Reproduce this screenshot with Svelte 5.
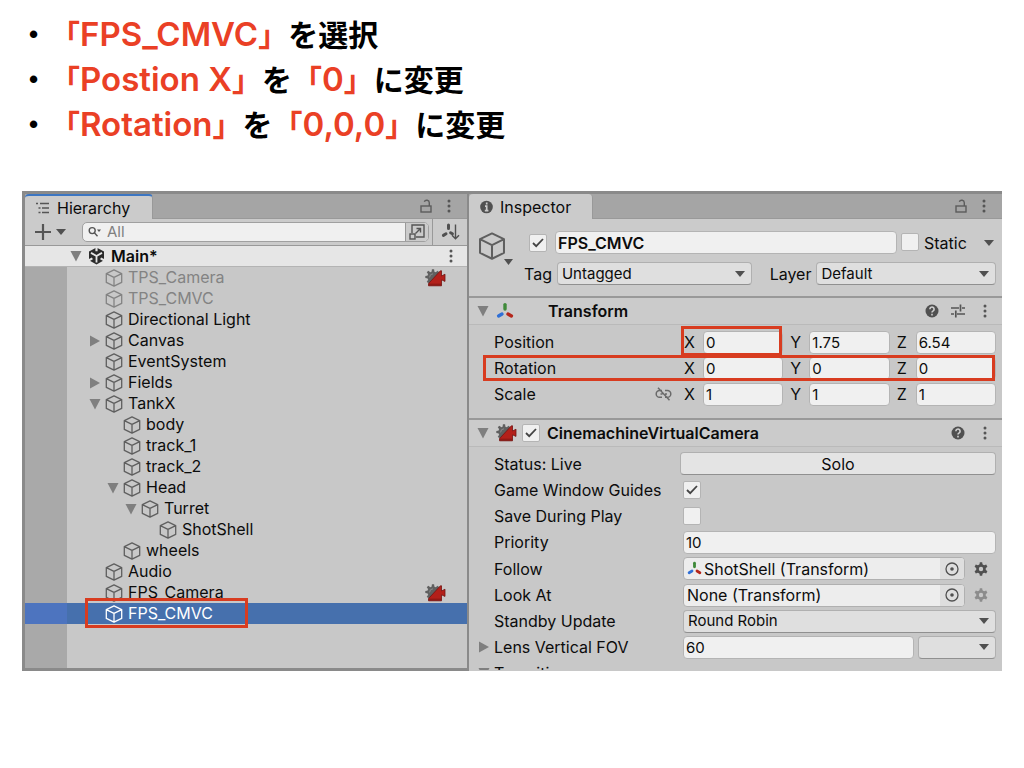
<script>
  const steps = [
    [['「', 'FPS_CMVC', '」'], 'を選択'],
    [['「', 'Postion X', '」'], 'を', ['「', '0', '」'], 'に変更'],
    [['「', 'Rotation', '」'], 'を', ['「', '0,0,0', '」'], 'に変更']
  ];

  const tree = [
    { name: 'TPS_Camera', level: 0, off: true, cam: true },
    { name: 'TPS_CMVC', level: 0, off: true },
    { name: 'Directional Light', level: 0 },
    { name: 'Canvas', level: 0, fold: 'closed' },
    { name: 'EventSystem', level: 0 },
    { name: 'Fields', level: 0, fold: 'closed' },
    { name: 'TankX', level: 0, fold: 'open' },
    { name: 'body', level: 1 },
    { name: 'track_1', level: 1 },
    { name: 'track_2', level: 1 },
    { name: 'Head', level: 1, fold: 'open' },
    { name: 'Turret', level: 2, fold: 'open' },
    { name: 'ShotShell', level: 3 },
    { name: 'wheels', level: 1 },
    { name: 'Audio', level: 0 },
    { name: 'FPS_Camera', level: 0, cam: true },
    { name: 'FPS_CMVC', level: 0, selected: true }
  ];

  let vectors = $state([
    { name: 'Position', values: ['0', '1.75', '6.54'] },
    { name: 'Rotation', values: ['0', '0', '0'] },
    { name: 'Scale', values: ['1', '1', '1'] }
  ]);
  const axes = ['X', 'Y', 'Z'];

  let active = $state(true);
  let isStatic = $state(false);
  let enabled = $state(true);
  let guides = $state(true);
  let savePlay = $state(false);
</script>

{#snippet cube(size)}
  <svg class="cube" width={size} height={size} viewBox="0 0 18 18" fill="none" stroke="currentColor" stroke-width="1.3" stroke-linejoin="round" aria-hidden="true">
    <path d="M9 .9 16.7 4.6V13.4L9 17.2 1.3 13.4V4.6ZM1.3 4.6 9 8.4 16.7 4.6M9 8.4V17.2" />
  </svg>
{/snippet}

{#snippet down(w)}
  <svg class="down" width={w} height="6" viewBox="0 0 10 6" preserveAspectRatio="none" aria-hidden="true"><path d="M0 0H10L5 6Z" fill="#505050" /></svg>
{/snippet}

{#snippet fold(kind)}
  <svg class="fold" width="12" height="12" viewBox="0 0 12 12" aria-hidden="true">
    <path d={kind === 'open' ? 'M.5 1H11.5L6 11.5Z' : 'M1 .5V11.5L11 6Z'} fill="#7f7f7f" />
  </svg>
{/snippet}

{#snippet dots()}
  <svg width="4" height="14" viewBox="0 0 4 14" fill="#555" aria-hidden="true"><circle cx="2" cy="2" r="1.5" /><circle cx="2" cy="7" r="1.5" /><circle cx="2" cy="12" r="1.5" /></svg>
{/snippet}

{#snippet lock()}
  <svg width="12" height="14" viewBox="0 0 12 14" fill="none" stroke="#5c5c5c" stroke-width="1.4" aria-hidden="true"><rect x="1" y="7" width="10" height="6" /><path d="M9.3 7V3.8A2.6 2.6 0 0 0 4.3 2.8" /></svg>
{/snippet}

{#snippet axesIcon(size)}
  <svg width={size} height={size} viewBox="0 0 18 18" fill="none" stroke-width="3.4" stroke-linecap="round" aria-hidden="true">
    <path d="M9 2.6V7" stroke="#3f8a3a" /><path d="M6 12 2.6 14" stroke="#2f6fd6" /><path d="M12 12 15.4 14" stroke="#b5261b" />
  </svg>
{/snippet}

{#snippet gear(size, color)}
  <svg width={size} height={size} viewBox="0 0 14 14" aria-hidden="true">
    <g fill={color}>
      <path fill-rule="evenodd" d="M7 2.2A4.8 4.8 0 1 0 7 11.8 4.8 4.8 0 0 0 7 2.2ZM7 4.8A2.2 2.2 0 1 1 7 9.2 2.2 2.2 0 0 1 7 4.8Z" />
      {#each [0, 60, 120, 180, 240, 300] as a}
        <path d="M5.4 3 5.8.3H8.2L8.6 3Z" transform="rotate({a} 7 7)" />
      {/each}
    </g>
  </svg>
{/snippet}

{#snippet cinemachine()}
  <svg class="cam" width="21" height="18" viewBox="0 0 21 18" aria-hidden="true">
    <g fill="#606060">
      <circle cx="8" cy="8" r="5.6" />
      {#each [0, 45, 90, 135, 180, 225, 270, 315] as a}
        <path d="M6.5 3.2 6.9.3H9.1L9.5 3.2Z" transform="rotate({a} 8 8)" />
      {/each}
    </g>
    <path d="M4.6 8.4A3.6 3.6 0 0 1 8 4.8" fill="none" stroke="#8a8a8a" />
    <path d="M3.5 16.8V14.6L15.4 1.8H16.5V7L20 5.2V12.4L16.5 10.8V16.8Z" fill="#b3201a" stroke="#721411" stroke-width=".8" />
    <path d="M4 14.6H16.2V16.6H4Z" fill="#7b1612" opacity=".6" />
  </svg>
{/snippet}

{#snippet help()}
  <svg width="14" height="14" viewBox="0 0 14 14" aria-hidden="true"><circle cx="7" cy="7" r="6.5" fill="#505050" /><path d="M4.9 5.3A2.1 2.1 0 1 1 8.2 6.9Q7 7.6 7 8.5M7 9.8V11.4" fill="none" stroke="#d0d0d0" stroke-width="1.6" /></svg>
{/snippet}

{#snippet tick(on)}
  {#if on}
    <svg width="12" height="12" viewBox="0 0 12 12" fill="none" stroke="#444" stroke-width="1.8" aria-hidden="true"><path d="M1 6 4.2 9.2 11 2" /></svg>
  {/if}
{/snippet}

{#snippet target()}
  <svg width="14" height="14" viewBox="0 0 14 14" fill="none" stroke="#505050" stroke-width="1.3" aria-hidden="true"><circle cx="7" cy="7" r="6" /><circle cx="7" cy="7" r="1.8" fill="#505050" stroke="none" /></svg>
{/snippet}

<main>
  <ul class="steps">
    {#each steps as step}
      <li><span class="bullet">•</span><span>{#each step as part}{#if Array.isArray(part)}<span class="hot">{part[0]}<span class="latin">{part[1]}</span>{part[2]}</span>{:else}{part}{/if}{/each}</span></li>
    {/each}
  </ul>

  <div class="editor">
    <section class="hierarchy">
      <header class="tabs">
        <div class="tab focused">
          <svg width="14" height="12" viewBox="0 0 14 12" stroke="#555" stroke-width="1.4" aria-hidden="true"><path d="M0 1.5H2M4 1.5H13M2.5 6H4.5M6 6H13M2.5 10.5H4.5M6 10.5H13" /></svg>
          Hierarchy
        </div>
        <div class="tab-tools"><button aria-label="Lock">{@render lock()}</button><button aria-label="Menu">{@render dots()}</button></div>
      </header>
      <div class="toolbar">
        <button class="add" aria-label="Create">
          <svg width="16" height="16" viewBox="0 0 16 16" stroke="#555" stroke-width="2.2" aria-hidden="true"><path d="M8 0V16M0 8H16" /></svg>
          {@render down(10)}
        </button>
        <div class="search">
          <svg width="14" height="12" viewBox="0 0 14 12" fill="none" stroke="#555" stroke-width="1.4" aria-hidden="true"><circle cx="4.2" cy="4.6" r="3" /><path d="M6.4 6.8 9.5 10.2" /><path d="M9 3.6H13L11 6Z" fill="#555" stroke="none" /></svg>
          <input type="text" placeholder="All" aria-label="Search hierarchy" />
          <button class="pick" aria-label="Open search">
            <svg width="16" height="16" viewBox="0 0 16 16" fill="none" stroke="#555" stroke-width="1.4" aria-hidden="true"><path d="M3 9V1H15V13H7" /><rect x="1" y="10" width="5" height="5" /><path d="M6.5 9.5 11.5 4.5M7.5 4.5H11.5V8.5" /></svg>
          </button>
        </div>
        <button class="sort" aria-label="Sorting">
          <svg width="19" height="18" viewBox="0 0 19 18" fill="none" stroke="#505050" aria-hidden="true"><path d="M7.5 2V5.4M5 10.8 2.4 12.4M9.6 9.8 11.4 10.8" stroke-width="3" stroke-linecap="round" /><path d="M14.5 1.5V15.5M11 12.2 14.5 15.8 18 12.2" stroke-width="1.4" /></svg>
        </button>
      </div>
      <div class="scene">
        {@render fold('open')}
        <svg width="17" height="18" viewBox="0 0 17 18" aria-hidden="true"><path d="M8.5.5 16 4.6V13.2L8.5 17.5 1 13.2V4.6Z" fill="#2b2b2b" /><path d="M8.5 9V15.4M8.5 9 3 5.9M8.5 9 14 5.9" stroke="#e6e6e6" stroke-width="1.8" /><path d="M8.5 0V4.2M0 13.8 4.4 11.4M17 13.8 12.6 11.4" stroke="#e6e6e6" stroke-width="2.2" /></svg>
        <strong>Main*</strong>
        <button aria-label="Scene menu">{@render dots()}</button>
      </div>
      <ul class="tree">
        {#each tree as node}
          <li class:off={node.off} class:selected={node.selected}>
            <span class="gutter"></span>
            <span class="node level{node.level}">
              <span class="slot">{#if node.fold}{@render fold(node.fold)}{/if}</span>
              {@render cube(18)}
              <span class="name">{node.name}</span>
              {#if node.selected}<span class="mark"></span>{/if}
            </span>
            {#if node.cam}{@render cinemachine()}{/if}
          </li>
        {/each}
        <li class="rest"><span class="gutter"></span></li>
      </ul>
    </section>

    <section class="inspector">
      <header class="tabs">
        <div class="tab">
          <svg width="13" height="14" viewBox="0 0 13 14" aria-hidden="true"><circle cx="6.5" cy="7" r="6.3" fill="#505050" /><path d="M6.7 2.6V4.4M5 6.2H6.7V10.4M4.8 10.6H8.4" stroke="#cbcbcb" stroke-width="1.7" fill="none" /></svg>
          Inspector
        </div>
        <div class="tab-tools"><button aria-label="Lock">{@render lock()}</button><button aria-label="Menu">{@render dots()}</button></div>
      </header>

      <div class="object">
        <button class="kind" aria-label="Object icon">{@render cube(28)}{@render down(9)}</button>
        <div class="object-rows">
          <div class="row1">
            <span class="check"><input type="checkbox" bind:checked={active} aria-label="Active" />{@render tick(active)}</span>
            <input class="field title" type="text" value="FPS_CMVC" aria-label="Name" />
            <label class="static"><span class="check"><input type="checkbox" bind:checked={isStatic} />{@render tick(isStatic)}</span>Static</label>
            <button class="static-menu" aria-label="Static options">{@render down(10)}</button>
          </div>
          <div class="row2">
            <label for="tag">Tag</label>
            <span class="select"><select id="tag"><option>Untagged</option></select>{@render down(10)}</span>
            <label for="layer" class="layer">Layer</label>
            <span class="select"><select id="layer"><option>Default</option></select>{@render down(10)}</span>
          </div>
        </div>
      </div>

      <header class="component">
        {@render fold('open')}
        {@render axesIcon(18)}
        <h2>Transform</h2>
        <div class="component-tools">
          <button aria-label="Help">{@render help()}</button>
          <button aria-label="Presets"><svg width="14" height="14" viewBox="0 0 14 14" stroke="#555" stroke-width="1.7" aria-hidden="true"><path d="M0 4H8M11 4H14M9.5 0.5V7.5M0 10H3M6 10H14M4.8 6.5V13.5" /></svg></button>
          <button aria-label="Menu">{@render dots()}</button>
        </div>
      </header>
      <div class="props transform">
        {#each vectors as v, i}
          <div class="prop">
            <span class="label">{v.name}
              {#if v.name === 'Scale'}
                <svg width="17" height="14" viewBox="0 0 17 14" fill="none" stroke="#6a6a6a" stroke-width="1.5" aria-hidden="true"><path d="M7 3.5H4.6A3.4 3.4 0 0 0 4.6 10.3H7M10 3.5H12.4A3.4 3.4 0 0 1 12.4 10.3H10M5.5 7H7.5M10 7H12M3 .8 14.5 13.2" /></svg>
              {/if}
            </span>
            <div class="vector">
              {#each axes as axis, j}
                <label class="axis"><span>{axis}</span><input class="field" type="text" bind:value={v.values[j]} aria-label="{v.name} {axis}" />{#if i === 0 && j === 0}<span class="mark"></span>{/if}</label>
              {/each}
            </div>
            {#if i === 1}<span class="mark"></span>{/if}
          </div>
        {/each}
      </div>

      <header class="component">
        {@render fold('open')}
        {@render cinemachine()}
        <span class="check"><input type="checkbox" bind:checked={enabled} aria-label="Enabled" />{@render tick(enabled)}</span>
        <h2>CinemachineVirtualCamera</h2>
        <div class="component-tools">
          <button aria-label="Help">{@render help()}</button>
          <button aria-label="Menu">{@render dots()}</button>
        </div>
      </header>
      <div class="props vcam">
        <div class="prop"><span class="label">Status: Live</span><button class="solo">Solo</button></div>
        <div class="prop"><label class="label" for="guides">Game Window Guides</label><span class="check"><input id="guides" type="checkbox" bind:checked={guides} />{@render tick(guides)}</span></div>
        <div class="prop"><label class="label" for="save">Save During Play</label><span class="check"><input id="save" type="checkbox" bind:checked={savePlay} />{@render tick(savePlay)}</span></div>
        <div class="prop"><label class="label" for="priority">Priority</label><input id="priority" class="field" type="text" value="10" /></div>
        <div class="prop">
          <label class="label" for="follow">Follow</label>
          <span class="ref">{@render axesIcon(15)}<input id="follow" type="text" readonly value="ShotShell (Transform)" /><button aria-label="Pick follow target">{@render target()}</button></span>
          <button class="cog" aria-label="Follow options">{@render gear(14, '#505050')}</button>
        </div>
        <div class="prop">
          <label class="label" for="look">Look At</label>
          <span class="ref"><input id="look" type="text" readonly value="None (Transform)" /><button aria-label="Pick look-at target">{@render target()}</button></span>
          <button class="cog" aria-label="Look-at options">{@render gear(14, '#8c8c8c')}</button>
        </div>
        <div class="prop"><label class="label" for="standby">Standby Update</label><span class="select"><select id="standby"><option>Round Robin</option></select>{@render down(10)}</span></div>
        <div class="prop folding">
          {@render fold('closed')}
          <label class="label" for="fov">Lens Vertical FOV</label><input id="fov" class="field" type="text" value="60" />
          <span class="select preset"><select aria-label="Lens preset"><option></option></select>{@render down(10)}</span>
        </div>
        <div class="prop folding cut">{@render fold('open')}<span class="label">Transitions</span></div>
      </div>
    </section>
  </div>
</main>

<style>
  :global(body) { margin: 0; background: #fff; }
  main { padding: 12px 22px 0; font: 16px/20px Inter, sans-serif; color: #0c0c0c; }
  ul { list-style: none; margin: 0; padding: 0; }
  svg { flex: none; display: block; }
  button, input, select { font: inherit; color: inherit; margin: 0; box-sizing: border-box; }
  button { display: flex; align-items: center; justify-content: center; padding: 0; border: 0; background: none; }

  .steps { font: 600 30px/45px Inter, "Noto Sans CJK JP", sans-serif; color: #000; margin-bottom: 44px; }
  .steps li { display: flex; height: 45px; padding-left: 7px; white-space: nowrap; }
  .bullet { width: 21px; font-family: "Liberation Sans", sans-serif; font-size: 26px; }
  .hot { color: #ea4025; }
  .latin { font-size: 33px; }

  .editor { display: grid; grid-template-columns: 442fr 533fr; gap: 2px; padding: 3px 0 0 3px; background: #8a8a8a; }
  .hierarchy, .inspector { background: #c8c8c8; min-width: 0; }
  .hierarchy { display: flex; flex-direction: column; margin-bottom: 3px; }

  .tabs { display: flex; justify-content: space-between; height: 24px; background: #a5a5a5; border-bottom: 1px solid #999; }
  .tab { box-sizing: border-box; display: flex; align-items: center; gap: 7px; height: 25px; padding: 1px 21px 0 11px; background: #cbcbcb; border-right: 1px solid #999; border-radius: 4px 4px 0 0; }
  .tab.focused { border-top: 2px solid #3c76c2; padding-top: 0; padding-right: 22px; }
  .tab-tools { display: flex; align-items: center; gap: 15px; padding-right: 16px; }

  .toolbar { display: flex; align-items: stretch; height: 26px; background: #cbcbcb; border-bottom: 1px solid #999; }
  .add { width: 50px; gap: 5px; }
  .search { flex: 1; display: flex; align-items: center; box-sizing: border-box; margin: 3px 3px 3px 7px; padding-left: 5px; border: 1px solid #a0a0a0; border-radius: 5px; background: #f0f0f0; overflow: hidden; }
  .search input { flex: 1; min-width: 0; border: 0; background: none; padding: 0 5px; font-size: 15px; }
  .search input::placeholder { color: #808080; opacity: 1; }
  .pick { width: 23px; align-self: stretch; background: #cbcbcb; border-left: 1px solid #999; }
  .sort { width: 35px; border-left: 1px solid #999; }

  .scene { display: flex; align-items: center; height: 20px; padding: 0 14px 0 45px; background: #e6e6e6; border-bottom: 1px solid #b4b4b4; gap: 6px; }
  .scene button { margin-left: auto; }
  .scene strong { font-weight: 600; }

  .tree { flex: 1; display: flex; flex-direction: column; }
  .tree li { display: flex; align-items: center; height: 21px; color: #0c0c0c; }
  .tree .rest { flex: 1; min-height: 44px; }
  .gutter { align-self: stretch; width: 42px; background: #a9a9a9; }
  .node { position: relative; flex: 1; align-self: stretch; display: flex; align-items: center; }
  .cube { color: #5f5f5f; }
  .slot { width: 16px; }
  .name { padding: 0 0 2px 5px; }
  .level0 { padding-left: 22px; }
  .level1 { padding-left: 40px; }
  .level2 { padding-left: 58px; }
  .level3 { padding-left: 76px; }
  .tree .cam { margin-right: 21px; }
  .off .name, .off .cube { color: #838383; }
  .tree li.selected { background: #4670ad; color: #fff; }
  .selected .gutter { background: #4d74bf; }
  .selected .cube { color: #fff; }

  .mark { position: absolute; border: 3px solid #d83c20; pointer-events: none; box-sizing: border-box; }
  .node .mark { left: 18px; width: 163px; top: -5px; height: 30px; }
  .axis .mark { left: -3px; right: 1px; top: -5px; height: 30px; }
  .prop > .mark { left: 14px; right: 7px; top: 0; height: 26px; }

  .field { flex: 1; min-width: 0; width: 100%; height: 23px; padding: 0 2px; border: 1px solid #b4b4b4; border-radius: 4px; background: #f0f0f0; font-size: 15px; }
  .title { font-size: 16px; font-weight: 600; }
  .check { display: grid; place-items: center; width: 18px; height: 18px; }
  .check > :global(*) { grid-area: 1 / 1; }
  .check svg { pointer-events: none; }
  .check input { appearance: none; width: 18px; height: 18px; border: 1px solid #b4b4b4; border-radius: 2px; background: #f0f0f0; }
  .select { flex: 1; min-width: 0; display: grid; align-items: center; }
  .select select { grid-area: 1 / 1; appearance: none; width: 100%; height: 23px; padding: 0 4px; border: 1px solid #b0b0b0; border-bottom-color: #909090; border-radius: 4px; background: #dfdfdf; font-size: 15px; }
  .select svg { grid-area: 1 / 1; justify-self: end; margin-right: 7px; pointer-events: none; }

  .object { display: flex; height: 77px; box-sizing: border-box; padding: 12px 6px 0 9px; background: #cbcbcb; }
  .kind { align-self: flex-start; align-items: flex-end; width: 39px; height: 34px; justify-content: flex-start; }
  .kind .cube { margin-bottom: 5px; }
  .kind .down { margin-left: -2px; }
  .object-rows { flex: 1; min-width: 0; display: flex; flex-direction: column; gap: 8px; }
  .row1, .row2 { display: flex; align-items: center; }
  .row1 { padding-left: 12px; gap: 8px; }
  .row1 .static { display: flex; gap: 5px; width: 72px; margin-left: -4px; }
  .static-menu { width: 15px; }
  .row2 { padding-left: 7px; gap: 5px; }
  .row2 .select { flex: 193; }
  .row2 .layer { margin-left: 13px; }
  .row2 .layer + .select { flex: 178; }

  .component { display: flex; align-items: center; height: 26px; padding: 0 15px 0 8px; background: #cbcbcb; border-top: 2px solid #999; border-bottom: 1px solid #bababa; gap: 7px; }
  .component h2 { margin: 0; font-size: 16px; font-weight: 600; }
  .component svg + h2 { margin-left: 27px; }
  .component .cam + .check { margin-left: -2px; }
  .component-tools { display: flex; gap: 12px; margin-left: auto; align-items: center; }
  .component-tools button:last-child { margin-left: 6px; }

  .transform { padding: 4px 0 11px; }
  .prop { position: relative; display: flex; align-items: center; height: 26px; padding: 0 6px 0 25px; }
  .label { box-sizing: border-box; width: 189px; flex: none; white-space: nowrap; }
  .transform .label { display: flex; align-items: center; justify-content: space-between; padding-right: 12px; width: 190px; }
  .vector { flex: 1; display: grid; grid-template-columns: repeat(3, 1fr); gap: 7px; }
  .axis { position: relative; display: flex; align-items: center; min-width: 0; }
  .axis > span:first-child { width: 19px; flex: none; }
  .vcam { padding-top: 3px; }
  .vcam .prop:nth-child(4n + 1) { height: 27px; }
  .solo { flex: 1; height: 23px; margin-left: -3px; border: 1px solid #b0b0b0; border-bottom-color: #909090; border-radius: 4px; background: #e4e4e4; }
  .ref { flex: 1; min-width: 0; display: flex; align-items: center; box-sizing: border-box; height: 23px; padding-left: 3px; gap: 2px; border: 1px solid #b0b0b0; border-radius: 4px; background: #ededed; overflow: hidden; }
  .ref input { flex: 1; min-width: 0; padding: 0; border: 0; background: none; }
  .ref button { width: 24px; align-self: stretch; background: #dedede; }
  .cog { width: 32px; margin-right: -1px; }
  .folding { padding-left: 9px; }
  .folding .label { margin-left: 4px; }
  .preset { flex: 0 0 78px; margin-left: 4px; }
  .vcam .prop.cut { height: 10px; overflow: hidden; align-items: flex-start; }
  .cut .fold { margin-top: 7px; }
  .cut .label { line-height: 26px; }
</style>
